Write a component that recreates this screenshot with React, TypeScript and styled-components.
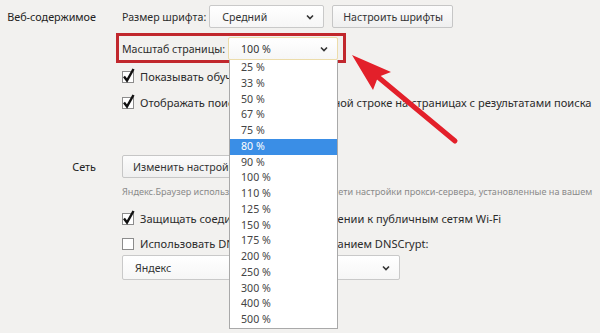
import * as React from "react";
import styled, { createGlobalStyle } from "styled-components";

const GlobalStyle = createGlobalStyle`
  html, body {
    margin: 0;
    padding: 0;
    background: #f2f1ef;
  }
  body {
    font-family: "Noto Sans", "Open Sans", sans-serif;
    font-size: 10.6px;
    color: #2b2b2b;
    width: 600px;
    height: 333px;
    overflow: hidden;
  }
`;

const Page = styled.div`
  position: relative;
  padding-top: 5px;
  height: 328px;
`;

const Section = styled.div<{ $top?: number }>`
  display: grid;
  grid-template-columns: 96px 1fr;
  column-gap: 26px;
  margin-top: ${(p) => p.$top ?? 0}px;
`;

const SectionLabel = styled.div`
  text-align: right;
  line-height: 23px;
  white-space: nowrap;
  font-size: 10.8px;
  color: #222;
`;

const Content = styled.div`
  display: flex;
  flex-direction: column;
  align-items: flex-start;
  min-width: 0;
`;

const Row = styled.div<{ $top?: number }>`
  display: flex;
  align-items: center;
  gap: 3px;
  height: 23px;
  margin-top: ${(p) => p.$top ?? 0}px;
  white-space: nowrap;
`;

const Highlight = styled(Row)`
  position: relative;
  gap: 3px;
  &::before {
    content: "";
    position: absolute;
    left: -6px;
    right: -8px;
    top: -4px;
    bottom: -3px;
    border: 3px solid #c1272d;
    pointer-events: none;
  }
`;

const SelectBox = styled.div<{ $w: number; $h?: number; $focus?: boolean }>`
  position: relative;
  box-sizing: border-box;
  width: ${(p) => p.$w}px;
  height: ${(p) => p.$h ?? 23}px;
  display: flex;
  align-items: center;
  justify-content: space-between;
  padding: 0 9px 0 12px;
  background: linear-gradient(#ffffff, #f6f6f6);
  border: 1px solid ${(p) => (p.$focus ? "#ecdcaa" : "#c9c9c9")};
  border-radius: 2px;
  color: #333;
`;

const Button = styled.div<{ $w?: number }>`
  box-sizing: border-box;
  width: ${(p) => (p.$w ? `${p.$w}px` : "auto")};
  height: 23px;
  display: flex;
  align-items: center;
  padding: 0 10px;
  background: linear-gradient(#fcfcfc, #efefef);
  border: 1px solid #c6c6c6;
  border-radius: 2px;
  color: #333;
  white-space: nowrap;
`;

const List = styled.div`
  position: absolute;
  z-index: 5;
  left: 0;
  top: 22px;
  width: 109px;
  box-sizing: border-box;
  background: #fff;
  border: 1px solid #a9a9a9;
  border-top: none;
`;

const Item = styled.div<{ $active?: boolean }>`
  height: 15.75px;
  line-height: 15.75px;
  padding-left: 11px;
  font-size: 10.6px;
  color: ${(p) => (p.$active ? "#fff" : "#444")};
  background: ${(p) => (p.$active ? "#3a8ee6" : "transparent")};
`;

const CheckRow = styled.div<{ $top?: number }>`
  display: flex;
  align-items: center;
  gap: 5px;
  height: 16px;
  margin-top: ${(p) => p.$top ?? 0}px;
  white-space: nowrap;
  font-size: 11.1px;
  color: #2b2b2b;
`;

const Hint = styled.div`
  height: 14px;
  line-height: 14px;
  margin-top: 7px;
  font-size: 9.1px;
  color: #8a8a8a;
  white-space: nowrap;
`;

const Arrow = styled.svg`
  position: absolute;
  left: 0;
  top: 0;
  z-index: 6;
  pointer-events: none;
`;

const Chevron = () => (
  <svg width="8" height="6" viewBox="0 0 8 6">
    <path d="M1 1.5 L4 4.5 L7 1.5" fill="none" stroke="#333" strokeWidth="1.6" />
  </svg>
);

const Check = ({ checked }: { checked?: boolean }) => (
  <svg width="13" height="16" viewBox="0 0 13 16" style={{ overflow: "visible" }}>
    <rect x="0.5" y="3.5" width="11" height="11" fill="#fff" stroke="#8c8c8c" />
    {checked && (
      <path d="M2 8.5 L5 12.5 L11.5 1" fill="none" stroke="#111" strokeWidth="2.4" />
    )}
  </svg>
);

const zoomLevels = [
  25, 33, 50, 67, 75, 80, 90, 100, 110, 125, 150, 175, 200, 250, 300, 400, 500,
];

export default function App() {
  return (
    <>
      <GlobalStyle />
      <Page>
        <Section>
          <SectionLabel>Веб-содержимое</SectionLabel>
          <Content>
            <Row>
              <span>Размер шрифта:</span>
              <SelectBox $w={115}>
                <span>Средний</span>
                <Chevron />
              </SelectBox>
              <Button $w={121} style={{ marginLeft: 5 }}>
                Настроить шрифты
              </Button>
            </Row>
            <Highlight $top={9}>
              <span>Масштаб страницы:</span>
              <SelectBox $w={110} $focus>
                <span>100 %</span>
                <Chevron />
                <List>
                  {zoomLevels.map((z) => (
                    <Item key={z} $active={z === 80}>
                      {z} %
                    </Item>
                  ))}
                </List>
              </SelectBox>
            </Highlight>
            <CheckRow $top={8}>
              <Check checked />
              Показывать обучающие подсказки
            </CheckRow>
            <CheckRow $top={10}>
              <Check checked />
              Отображать поисковый запрос в умной строке на страницах с результатами поиска
            </CheckRow>
          </Content>
        </Section>
        <Section $top={45}>
          <SectionLabel>Сеть</SectionLabel>
          <Content>
            <Button $w={216}>Изменить настройки прокси-сервера</Button>
            <Hint>
              Яндекс.Браузер использует для подключения к сети настройки прокси-сервера, установленные на вашем
            </Hint>
            <CheckRow $top={11}>
              <Check checked />
              Защищать соединение при подключении к публичным сетям Wi-Fi
            </CheckRow>
            <CheckRow $top={9}>
              <Check />
              Использовать DNS-сервер с шифрованием DNSCrypt:
            </CheckRow>
            <SelectBox $w={278} $h={25} style={{ marginTop: 4 }}>
              <span>Яндекс</span>
              <Chevron />
            </SelectBox>
          </Content>
        </Section>
        <Arrow width="600" height="333" viewBox="0 0 600 333">
          <line x1="455" y1="141" x2="372" y2="72" stroke="#e3202a" strokeWidth="5" strokeLinecap="round" />
          <path d="M352 55 L391 72 L378 77 L373 90 Z" fill="#e3202a" />
        </Arrow>
      </Page>
    </>
  );
}
